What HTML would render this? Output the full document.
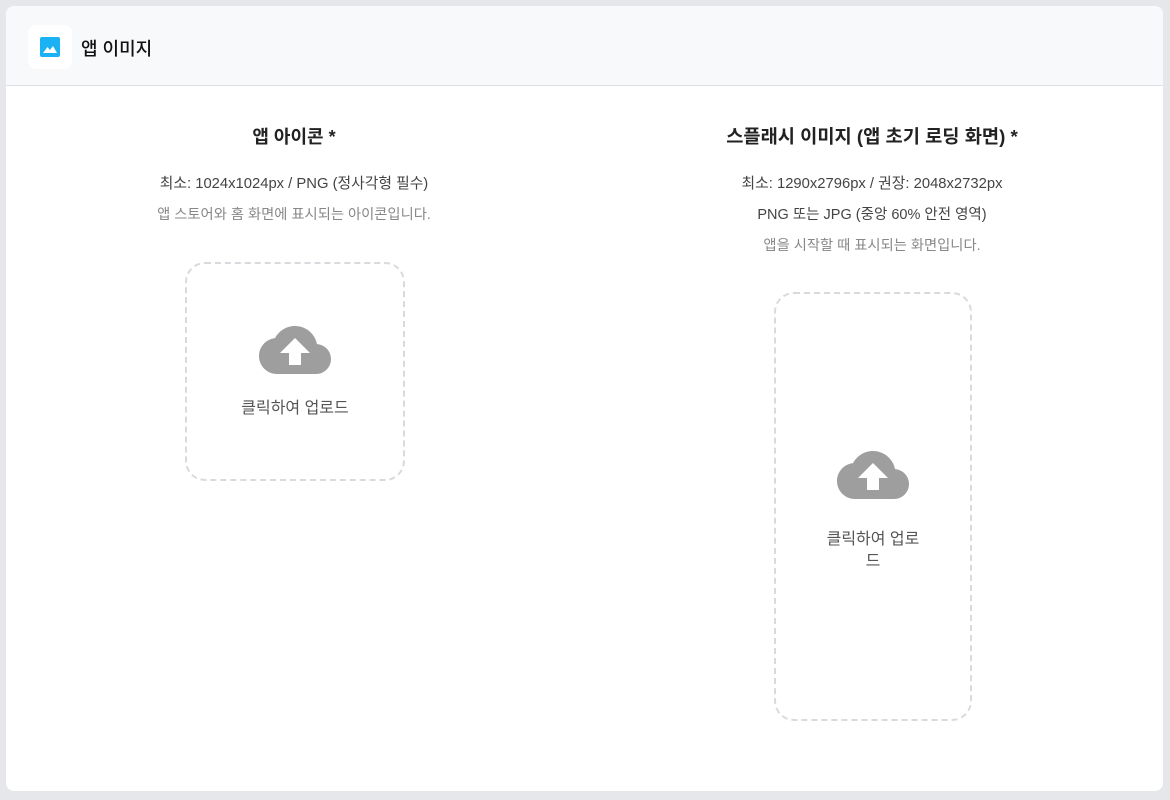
<!DOCTYPE html>
<html><head><meta charset="utf-8"><style>
*{margin:0;padding:0;box-sizing:border-box}
body{width:1170px;height:800px;background:#e5e7eb;font-family:"Liberation Sans","Noto Sans CJK KR",sans-serif;position:relative;overflow:hidden}
.card{position:absolute;left:6px;top:6px;width:1157px;height:785px;background:#fff;border-radius:8px;overflow:hidden}
.hd{height:80px;background:#f8f9fb;border-bottom:1px solid #dde1e6;position:relative}
.ib{position:absolute;left:22px;top:19px;width:44px;height:44px;background:#fff;border-radius:8px}
.ib svg{position:absolute;left:12px;top:12px}
.ht{position:absolute;left:75px;top:29px;font-size:18px;color:#111;font-weight:500}
.col{position:absolute;top:82px;text-align:center}
h2{font-size:18px;font-weight:700;color:#222;margin-top:37px;line-height:24px}
.l1{font-size:14.8px;color:#444;margin-top:25px;line-height:20px}
.l2{font-size:14.3px;color:#888;margin-top:11px;line-height:20px}
.l3{font-size:14.5px;color:#444;margin-top:11px;line-height:20px}
.box{position:absolute;border:2px dashed #d8dadd;border-radius:20px;text-align:center}
.box svg{display:block;margin:0 auto}
.bt{font-size:16px;color:#555;line-height:22px}
</style></head><body>
<div class="card">
 <div class="hd">
  <div class="ib"><svg width="20" height="20" viewBox="0 0 20 20"><rect x="0" y="0" width="20" height="20" rx="2" fill="#1ab2f5"/><path d="M3 16 L7.5 10 L10 13 L13 9 L17 16Z" fill="#fff"/></svg></div>
  <div class="ht">앱 이미지</div>
 </div>
 <div class="col" style="left:88px;width:400px">
  <h2>앱 아이콘 *</h2>
  <div class="l1">최소: 1024x1024px / PNG (정사각형 필수)</div>
  <div class="l2">앱 스토어와 홈 화면에 표시되는 아이콘입니다.</div>
 </div>
 <div class="col" style="left:666px;width:400px">
  <h2 style="font-size:18.7px">스플래시 이미지 (앱 초기 로딩 화면) *</h2>
  <div class="l1">최소: 1290x2796px / 권장: 2048x2732px</div>
  <div class="l3">PNG 또는 JPG (중앙 60% 안전 영역)</div>
  <div class="l2">앱을 시작할 때 표시되는 화면입니다.</div>
 </div>
 <div class="box" style="left:179px;top:256px;width:220px;height:219px;padding-top:50px">
  <svg width="72" height="72" viewBox="0 0 24 24"><path fill="#9e9e9e" d="M19.35 10.04C18.67 6.59 15.64 4 12 4 9.11 4 6.6 5.64 5.35 8.04 2.34 8.36 0 10.91 0 14c0 3.31 2.69 6 6 6h13c2.76 0 5-2.24 5-5 0-2.64-2.05-4.78-4.65-4.96zM14 13v4h-4v-4H7l5-5 5 5h-3z"/></svg>
  <div class="bt" style="margin-top:12px">클릭하여 업로드</div>
 </div>
 <div class="box" style="left:768px;top:286px;width:198px;height:429px;padding:145px 45px 0">
  <svg width="72" height="72" viewBox="0 0 24 24"><path fill="#9e9e9e" d="M19.35 10.04C18.67 6.59 15.64 4 12 4 9.11 4 6.6 5.64 5.35 8.04 2.34 8.36 0 10.91 0 14c0 3.31 2.69 6 6 6h13c2.76 0 5-2.24 5-5 0-2.64-2.05-4.78-4.65-4.96zM14 13v4h-4v-4H7l5-5 5 5h-3z"/></svg>
  <div class="bt" style="margin-top:18px">클릭하여 업로드</div>
 </div>
</div>
</body></html>
